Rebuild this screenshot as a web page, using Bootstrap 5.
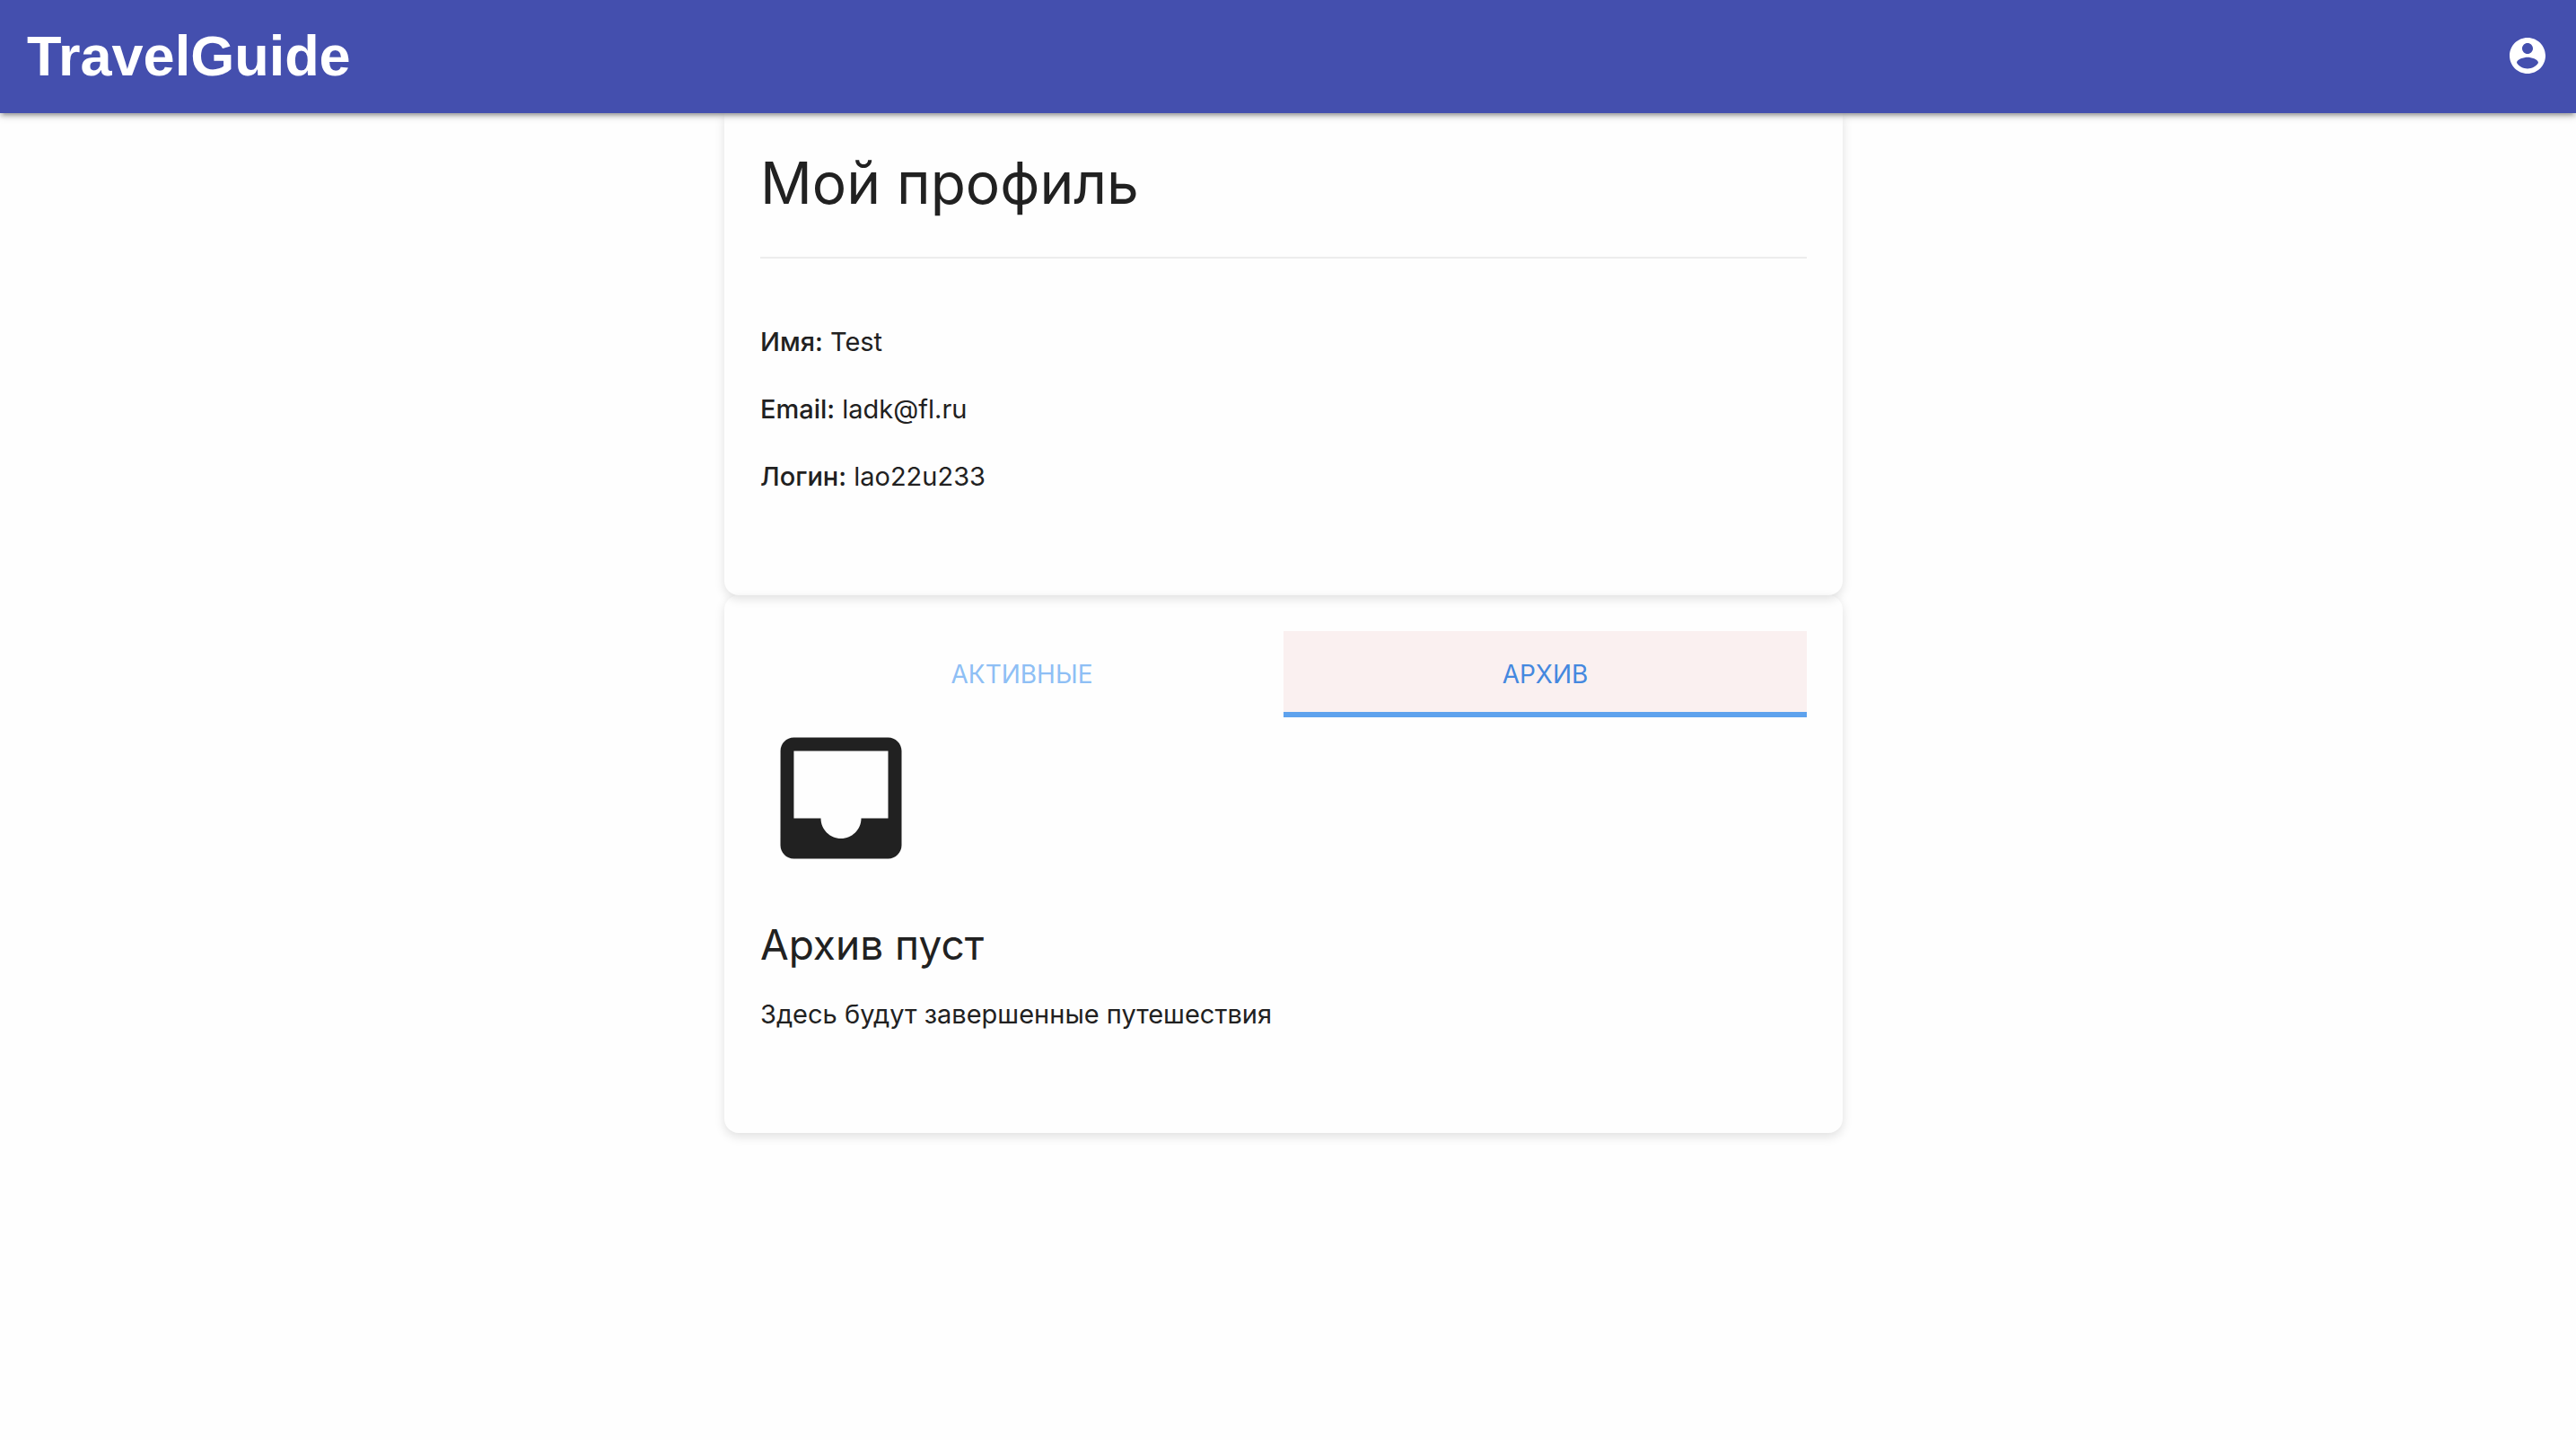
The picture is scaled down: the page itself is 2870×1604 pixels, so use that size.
<!DOCTYPE html>
<html lang="ru">
<head>
<meta charset="utf-8">
<meta name="viewport" content="width=device-width, initial-scale=1">
<title>TravelGuide</title>
<link href="https://cdn.jsdelivr.net/npm/bootstrap@5.3.0/dist/css/bootstrap.min.css" rel="stylesheet">
<style>
  body { background: #fefefe; color: #212121; font-family: Inter, Roboto, sans-serif; font-size: 29px; line-height: 45px; }
  .top-bar { height: 126px; padding: 0 30px 2px; background: #444fae; z-index: 10;
    box-shadow: 0 4px 4px 0 rgba(0,0,0,.14), 0 6px 2px -4px rgba(0,0,0,.12), 0 2px 10px 0 rgba(0,0,0,.2); }
  .brand-link { font: bold 63px/124px "Liberation Sans", Arial, sans-serif; }
  .profile-wrap { max-width: 1266px; padding: 0 10px; }
  .main-area { padding-right: 10px; padding-bottom: 40px; }
  .panel { background: transparent; border: 0; border-radius: 16px; padding: 40px 40px 80px; box-shadow: 0 4px 12px rgba(0,0,0,.12); }
  .panel-first { border-top-left-radius: 0; border-top-right-radius: 0; }
  .panel-title { font-size: 64px; line-height: 76px; font-weight: 400; margin: 0 0 44px; }
  .panel-rule { height: 2px; border: 0; margin: 0 0 70px; background: #ededed; opacity: 1; }
  .field-row { margin: 0 0 30px; }
  .field-row strong { font-weight: 500; }
  .panel .tab-btn { height: 96px; padding: 0; border: 0; border-radius: 0; background: transparent; font-size: 28px; line-height: 96px; color: #8ebff5; }
  .panel .tab-btn.active { background: #faf0f0; color: #4488df; box-shadow: inset 0 -6px #5ea2ed; }
  .empty-title { font-size: 46px; line-height: 54px; font-weight: 400; margin: 46px 0 28px; }
</style>
</head>
<body>
<header class="top-bar position-sticky top-0 d-flex align-items-center justify-content-between">
  <a class="brand-link text-white text-decoration-none" href="#">TravelGuide</a>
  <a class="d-flex text-white" href="#" aria-label="Профиль">
    <svg width="48" height="48" viewBox="0 0 24 24" fill="currentColor" aria-hidden="true"><path d="M12 2C6.480 2 2 6.480 2 12s4.480 10 10 10 10-4.480 10-10S17.520 2 12 2zm0 3c1.660 0 3 1.340 3 3s-1.340 3-3 3-3-1.340-3-3 1.340-3 3-3zm0 14.200c-2.500 0-4.710-1.280-6-3.220.03-1.990 4-3.080 6-3.080 1.990 0 5.970 1.090 6 3.080-1.290 1.940-3.500 3.220-6 3.220z"/></svg>
  </a>
</header>
<main class="main-area">
  <div class="container-fluid profile-wrap">
    <section class="card panel panel-first">
      <h1 class="panel-title">Мой профиль</h1>
      <hr class="panel-rule">
      <p class="field-row"><strong>Имя:</strong> Test</p>
      <p class="field-row"><strong>Email:</strong> ladk@fl.ru</p>
      <p class="field-row"><strong>Логин:</strong> lao22u233</p>
    </section>
    <section class="card panel">
      <div class="nav nav-justified" role="tablist">
        <button class="nav-link nav-item tab-btn" type="button" role="tab" aria-selected="false">АКТИВНЫЕ</button>
        <button class="nav-link nav-item tab-btn active" type="button" role="tab" aria-selected="true">АРХИВ</button>
      </div>
      <svg width="180" height="180" viewBox="0 0 24 24" fill="currentColor" aria-hidden="true"><path d="M19 3H4.990c-1.110 0-1.980.89-1.980 2L3 19c0 1.100.88 2 1.990 2H19c1.100 0 2-.9 2-2V5c0-1.110-.9-2-2-2zm0 12h-4c0 1.660-1.350 3-3 3s-3-1.340-3-3H4.990V5H19v10z"/></svg>
      <h2 class="empty-title">Архив пуст</h2>
      <p class="field-row">Здесь будут завершенные путешествия</p>
    </section>
  </div>
</main>
<script src="https://cdn.jsdelivr.net/npm/bootstrap@5.3.0/dist/js/bootstrap.bundle.min.js"></script>
</body>
</html>
